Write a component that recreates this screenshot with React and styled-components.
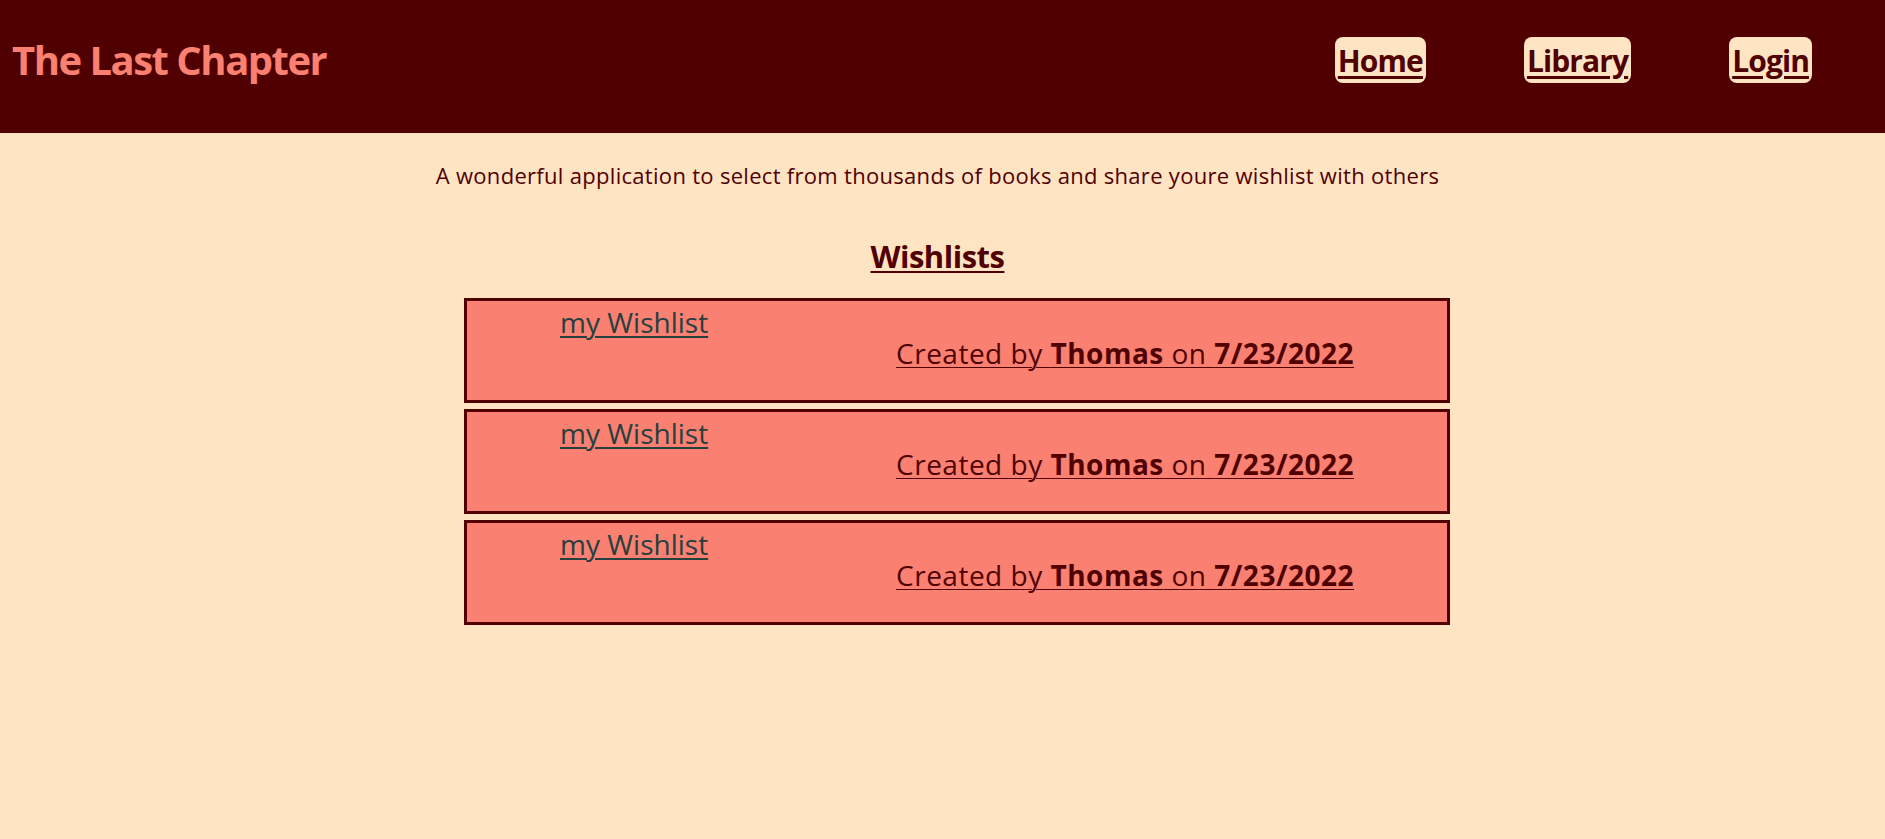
import React from "react";
import styled, { createGlobalStyle } from "styled-components";

const GlobalStyle = createGlobalStyle`
  html, body {
    margin: 0;
    padding: 0;
    background: #ffe4c4;
    font-family: "Open Sans", "Noto Sans", sans-serif;
  }
  * { box-sizing: border-box; }
`;

const Page = styled.div`
  min-height: 839px;
  background: #ffe4c4;
`;

const Header = styled.header`
  height: 133px;
  background: #500000;
  display: flex;
  justify-content: space-between;
  align-items: flex-start;
  padding: 0 73px 0 12px;
`;

const Brand = styled.h1`
  margin: 40px 0 0;
  font-size: 40px;
  line-height: 40px;
  font-weight: 700;
  color: #fa8072;
  letter-spacing: -1.5px;
`;

const Nav = styled.nav`
  display: flex;
  gap: 98px;
  margin-top: 37px;
`;

const NavLink = styled.a`
  display: block;
  background: #ffe4c4;
  color: #500000;
  border-radius: 8px;
  padding: 3px 3px 2px;
  font-size: 30px;
  line-height: 41px;
  font-weight: 700;
  text-decoration: underline;
  text-decoration-thickness: 3px;
  text-underline-offset: 4px;
  letter-spacing: -0.9px;
`;

const Main = styled.main`
  padding-right: 10px;
  display: flex;
  flex-direction: column;
`;

const Tagline = styled.p`
  margin: 27px 0 0;
  text-align: center;
  font-size: 22px;
  line-height: 30px;
  color: #500000;
  letter-spacing: 0.3px;
`;

const SectionTitle = styled.h2`
  margin: 45px 0 21px;
  text-align: center;
  font-size: 31px;
  line-height: 42px;
  font-weight: 700;
  color: #500000;
  text-decoration: underline;
  text-decoration-thickness: 2px;
  text-underline-offset: 3px;
  letter-spacing: -0.5px;
`;

const List = styled.ul`
  list-style: none;
  margin: 0 0 0 464px;
  padding: 0;
  width: 986px;
  display: flex;
  flex-direction: column;
  gap: 6px;
`;

const Card = styled.li`
  height: 105px;
  border: 3px solid #500000;
  background: #fa8072;
  padding: 6px 93px 0;
  display: flex;
  flex-direction: column;
`;

const CardTitle = styled.a`
  align-self: flex-start;
  font-size: 28px;
  line-height: 31px;
  color: #263f3f;
  text-decoration: underline;
  text-decoration-thickness: 2px;
  text-underline-offset: 3px;
  letter-spacing: 0;
`;

const CardMeta = styled.p`
  align-self: flex-end;
  margin: 0;
  font-size: 28px;
  line-height: 31px;
  color: #500000;
  text-decoration: underline;
  text-decoration-thickness: 1px;
  text-underline-offset: 3px;
  letter-spacing: 0.5px;
`;

const Strong = styled.b`
  font-weight: 700;
`;

const wishlists = [
  { id: 1, name: "my Wishlist", owner: "Thomas", date: "7/23/2022" },
  { id: 2, name: "my Wishlist", owner: "Thomas", date: "7/23/2022" },
  { id: 3, name: "my Wishlist", owner: "Thomas", date: "7/23/2022" },
];

export default function App() {
  return (
    <Page>
      <GlobalStyle />
      <Header>
        <Brand>The Last Chapter</Brand>
        <Nav>
          <NavLink href="#">Home</NavLink>
          <NavLink href="#">Library</NavLink>
          <NavLink href="#">Login</NavLink>
        </Nav>
      </Header>
      <Main>
        <Tagline>
          A wonderful application to select from thousands of books and share youre wishlist with others
        </Tagline>
        <SectionTitle>Wishlists</SectionTitle>
        <List>
          {wishlists.map((w) => (
            <Card key={w.id}>
              <CardTitle href="#">{w.name}</CardTitle>
              <CardMeta>
                Created by <Strong>{w.owner}</Strong> on <Strong>{w.date}</Strong>
              </CardMeta>
            </Card>
          ))}
        </List>
      </Main>
    </Page>
  );
}
